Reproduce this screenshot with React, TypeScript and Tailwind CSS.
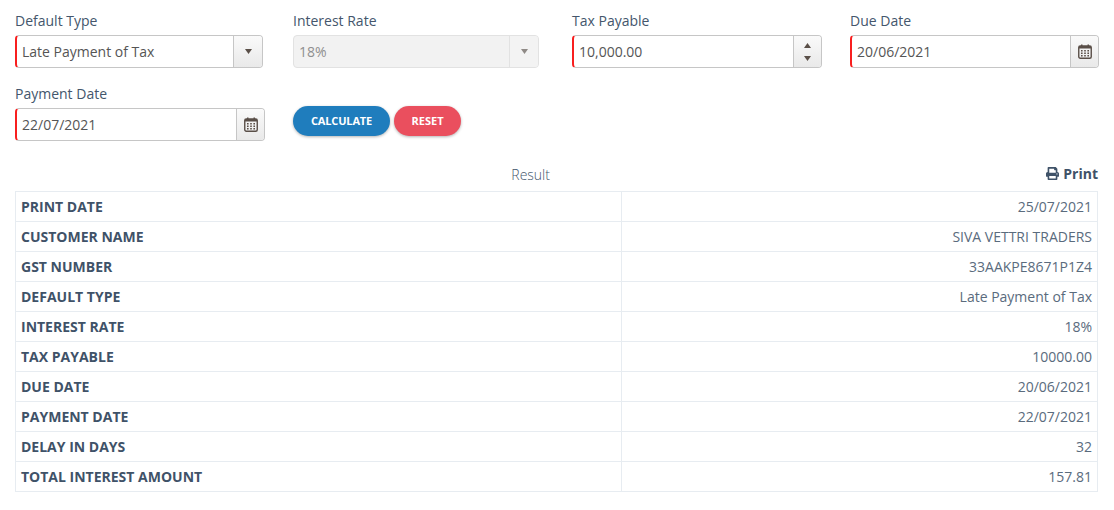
import React from 'react';
import { FaPrint } from 'react-icons/fa';

const rows = [
  ['PRINT DATE', '25/07/2021'],
  ['CUSTOMER NAME', 'SIVA VETTRI TRADERS'],
  ['GST NUMBER', '33AAKPE8671P1Z4'],
  ['DEFAULT TYPE', 'Late Payment of Tax'],
  ['INTEREST RATE', '18%'],
  ['TAX PAYABLE', '10000.00'],
  ['DUE DATE', '20/06/2021'],
  ['PAYMENT DATE', '22/07/2021'],
  ['DELAY IN DAYS', '32'],
  ['TOTAL INTEREST AMOUNT', '157.81'],
];

const CalendarIcon = () => (
  <svg width="14" height="15" viewBox="0 0 14 15" className="text-[#5a4f48]">
    <rect x="0.75" y="2" width="12.5" height="12.25" rx="1.5" fill="none" stroke="currentColor" strokeWidth="1.4" />
    <rect x="1" y="2" width="12" height="2.5" fill="currentColor" />
    <rect x="3" y="0.5" width="1.5" height="3" fill="currentColor" />
    <rect x="9.5" y="0.5" width="1.5" height="3" fill="currentColor" />
    <g fill="currentColor">
      <rect x="3" y="6" width="1.6" height="1.5" />
      <rect x="6.2" y="6" width="1.6" height="1.5" />
      <rect x="9.4" y="6" width="1.6" height="1.5" />
      <rect x="3" y="8.5" width="1.6" height="1.5" />
      <rect x="6.2" y="8.5" width="1.6" height="1.5" />
      <rect x="9.4" y="8.5" width="1.6" height="1.5" />
      <rect x="3" y="11" width="1.6" height="1.5" />
      <rect x="6.2" y="11" width="1.6" height="1.5" />
      <rect x="9.4" y="11" width="1.6" height="1.5" />
    </g>
  </svg>
);

const Caret = ({ up, light }: { up?: boolean; light?: boolean }) => (
  <svg width="7" height="5" viewBox="0 0 7 5" className={light ? 'text-[#8f8a86]' : 'text-[#5a4f48]'}>
    <path d={up ? 'M3.5 0L7 5H0Z' : 'M0 0H7L3.5 5Z'} fill="currentColor" />
  </svg>
);

const Addon = ({ children, width, disabled }: { children: React.ReactNode; width: string; disabled?: boolean }) => (
  <div
    className={`flex flex-col items-center justify-center gap-[8px] shrink-0 h-full border-l ${width} ${
      disabled ? 'border-[#e2e2e2] bg-[#f3f3f3]' : 'border-[#c6c6c6] bg-gradient-to-b from-[#fafafa] to-[#e9e9e9]'
    }`}
  >
    {children}
  </div>
);

const Field = ({
  label,
  value,
  addon,
  className,
}: {
  label: string;
  value: string;
  addon: React.ReactNode;
  className?: string;
}) => (
  <div className={className}>
    <div className="text-[14px] leading-[20px] text-[#44566c] mb-[4px]">{label}</div>
    <div className="flex items-center h-[33px] bg-white border border-l-2 border-[#c6c6c6] border-l-[#f81f1f] rounded-[4px] overflow-hidden">
      <div className="flex-1 pl-[5px] text-[14px] text-[#555555]">{value}</div>
      {addon}
    </div>
  </div>
);

export default function App() {
  return (
    <div className="w-[1114px] h-[510px] bg-white pl-[15px] pt-[11px] font-['Open_Sans',sans-serif]">
      <div className="grid grid-cols-[278px_279px_278px_249px]">
        <Field
          label="Default Type"
          value="Late Payment of Tax"
          className="w-[248px]"
          addon={
            <Addon width="w-[29px]">
              <Caret />
            </Addon>
          }
        />
        <div className="w-[246px]">
          <div className="text-[14px] leading-[20px] text-[#44566c] mb-[4px]">Interest Rate</div>
          <div className="flex items-center h-[33px] bg-[#f2f2f2] border border-[#e2e2e2] rounded-[4px] overflow-hidden">
            <div className="flex-1 pl-[5px] text-[14px] text-[#8f8f8f]">18%</div>
            <Addon width="w-[29px]" disabled>
              <Caret light />
            </Addon>
          </div>
        </div>
        <Field
          label="Tax Payable"
          value="10,000.00"
          className="w-[250px]"
          addon={
            <Addon width="w-[28px]">
              <Caret up />
              <Caret />
            </Addon>
          }
        />
        <Field
          label="Due Date"
          value="20/06/2021"
          addon={
            <Addon width="w-[28px]">
              <CalendarIcon />
            </Addon>
          }
        />
      </div>

      <div className="flex mt-[16px]">
        <Field
          label="Payment Date"
          value="22/07/2021"
          className="w-[250px]"
          addon={
            <Addon width="w-[28px]">
              <CalendarIcon />
            </Addon>
          }
        />
        <div className="flex items-start gap-[4px] ml-[28px] pt-[22px]">
          <button className="w-[97px] h-[30px] rounded-full bg-[#1f7dbd] text-white text-[11px] tracking-[-0.15px] font-bold shadow-[0_1px_3px_rgba(0,0,0,0.3)]">
            CALCULATE
          </button>
          <button className="w-[67px] h-[30px] rounded-full bg-[#ea4f5e] text-white text-[11px] font-bold shadow-[0_1px_3px_rgba(0,0,0,0.3)]">
            RESET
          </button>
        </div>
      </div>

      <div className="flex items-center w-[1083px] mt-[23px] h-[20px] text-[14px] text-[#44566c]">
        <div className="flex-1 text-center font-light">Result</div>
        <div className="flex items-center gap-[4px] -mt-px font-bold text-[#3f5268]">
          <FaPrint className="text-[13px]" />
          Print
        </div>
      </div>

      <table className="w-[1083px] mt-[7px] table-fixed border-collapse text-[14px]">
        <tbody>
          {rows.map(([name, value]) => (
            <tr key={name} className="h-[30px]">
              <td className="w-[606px] border border-[#e7ecf1] px-[5px] font-bold text-[#3f5268]">{name}</td>
              <td className="border border-[#e7ecf1] px-[5px] text-right text-[#5a6b7d]">{value}</td>
            </tr>
          ))}
        </tbody>
      </table>
    </div>
  );
}
